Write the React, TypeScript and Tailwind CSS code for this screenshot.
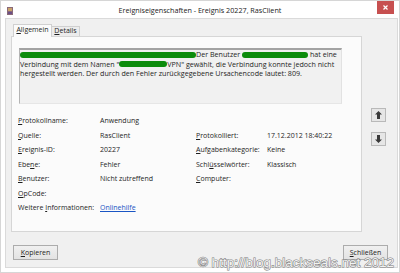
import React from "react";

// ---------------------------------------------------------------------------
// Feldzeile im unteren Bereich (Label + Wert)
// ---------------------------------------------------------------------------
interface Field {
  label: React.ReactNode;
  value?: React.ReactNode;
}

function Key({ children }: { children: React.ReactNode }) {
  return <span className="underline underline-offset-[1px]">{children}</span>;
}

function Redacted({ w }: { w: number }) {
  // Breite kommt aus den Daten, daher inline
  return (
    <span
      className="inline-block h-[6px] rounded-[3px] bg-[#0c8c0c] align-[-0.5px]"
      style={{ width: w }}
    />
  );
}

function ArrowButton({ down }: { down?: boolean }) {
  return (
    <button className="flex h-[14px] w-[15px] items-center justify-center border border-[#b9b9b9] bg-[#e6e6e6]">
      <svg width="7" height="8" viewBox="0 0 7 8" className={down ? "rotate-180" : ""}>
        <path d="M3.5 0 L7 3.6 L5 3.6 L5 8 L2 8 L2 3.6 L0 3.6 Z" fill="#3a3a3a" />
      </svg>
    </button>
  );
}

function WinButton({ children }: { children: React.ReactNode }) {
  return (
    <button className="flex h-[15px] w-[45px] items-center justify-center border border-[#acacac] bg-gradient-to-b from-[#f0f0f0] to-[#e3e3e3] text-[7px] leading-none text-[#1e1e1e]">
      {children}
    </button>
  );
}

export default function App() {
  const left: Field[] = [
    { label: <><Key>P</Key>rotokollname:</>, value: "Anwendung" },
    { label: <><Key>Q</Key>uelle:</>, value: "RasClient" },
    { label: <><Key>E</Key>reignis-ID:</>, value: "20227" },
    { label: <>Ebe<Key>n</Key>e:</>, value: "Fehler" },
    { label: <><Key>B</Key>enutzer:</>, value: "Nicht zutreffend" },
    { label: <><Key>O</Key>pCode:</> },
  ];
  const right: Field[] = [
    { label: null },
    { label: <><Key>P</Key>rotokolliert:</>, value: "17.12.2012 18:40:22" },
    { label: <><Key>A</Key>ufgabenkategorie:</>, value: "Keine" },
    { label: <>Schl<Key>ü</Key>sselwörter:</>, value: "Klassisch" },
    { label: <><Key>C</Key>omputer:</> },
    { label: null },
  ];

  return (
    <div className="relative h-[273px] w-[400px] overflow-hidden border border-[#d6d6d6] bg-white font-['Open_Sans',sans-serif] text-[7px] text-[#1e1e1e]">
      {/* Titelleiste */}
      <div className="grid h-[17px] grid-cols-[1fr_auto_1fr] items-start">
        <div className="pl-[6px] pt-[6px]">
          <svg width="6" height="8" viewBox="0 0 6 8">
            <rect x="0" y="0" width="6" height="8" fill="#8a6a7a" />
            <rect x="1" y="1" width="4" height="3" fill="#c9a36a" />
            <rect x="1" y="5" width="4" height="2" fill="#6b4f86" />
          </svg>
        </div>
        <div className="pt-[4px] text-[7.2px] leading-[10px] text-[#222]">
          Ereigniseigenschaften - Ereignis 20227, RasClient
        </div>
        <div className="flex justify-end pr-[5px]">
          <button className="flex h-[13px] w-[17px] items-center justify-center bg-[#c75050]">
            <svg width="5" height="5" viewBox="0 0 5 5">
              <path d="M0.5 0.5 L4.5 4.5 M4.5 0.5 L0.5 4.5" stroke="#fff" strokeWidth="1.2" />
            </svg>
          </button>
        </div>
      </div>

      {/* Fensterinhalt */}
      <div className="ml-[4px] mr-[1px] flex h-[250px] flex-col border border-[#dadada] bg-[#f0f0f0] pt-[5px]">
        <div className="flex pl-[5px]">
          <div className="w-[351px]">
            {/* Registerkarten */}
            <div className="flex h-[12px] items-end pl-[2px]">
              <div className="relative z-10 -mb-px flex h-[13px] w-[39px] items-center justify-center border border-b-0 border-[#d0d0d0] bg-[#fbfbfb] pb-px">
                <Key>A</Key>llgemein
              </div>
              <div className="flex h-[10px] w-[28px] items-center justify-center border border-b-0 border-l-0 border-[#d0d0d0] bg-[#ececec]">
                <Key>D</Key>etails
              </div>
            </div>

            {/* Registerseite */}
            <div className="h-[196px] border border-[#d6d6d6] bg-[#fbfbfb] pl-[7px] pt-[11px]">
              <div className="h-[56px] w-[323px] border-b border-l border-r border-t-2 border-b-[#e6e6e6] border-l-[#b4b4b4] border-r-[#e2e2e2] border-t-[#a3a3a3] bg-[#f1f1f1] text-[7.15px] leading-[9.5px] whitespace-nowrap">
                <div>
                  <Redacted w={176} />
                  Der Benutzer <Redacted w={66} /> hat eine
                </div>
                <div>
                  Verbindung mit dem Namen &quot;<Redacted w={48} />VPN&quot; gewählt, die Verbindung konnte jedoch nicht
                </div>
                <div>
                  hergestellt werden. Der durch den Fehler zurückgegebene Ursachencode lautet: 809.
                </div>
              </div>

              <div className="ml-[-1px] mt-[10px] grid grid-cols-[82px_96px_71px_1fr] auto-rows-[14.5px] items-center whitespace-nowrap">
                {left.map((f, i) => (
                  <React.Fragment key={i}>
                    <div>{f.label}</div>
                    <div>{f.value}</div>
                    <div>{right[i].label}</div>
                    <div>{right[i].value}</div>
                  </React.Fragment>
                ))}
                <div>
                  Weitere <Key>I</Key>nformationen:
                </div>
                <div className="col-span-3">
                  <span className="text-[#1a55c4] underline underline-offset-[1px]">Onlinehilfe</span>
                </div>
              </div>
            </div>
          </div>

          {/* Vor / Zurück */}
          <div className="ml-[9px] flex flex-col gap-[10px] pt-[84px]">
            <ArrowButton />
            <ArrowButton down />
          </div>
        </div>

        {/* Schaltflächen */}
        <div className="mt-[13px] flex justify-between pl-[7px] pr-[9px]">
          <WinButton>
            <Key>K</Key>opieren
          </WinButton>
          <WinButton>
            <Key>S</Key>chließen
          </WinButton>
        </div>
      </div>

      {/* Wasserzeichen */}
      <div className="absolute bottom-[1px] right-[5px] font-['Liberation_Sans',Arial,sans-serif] text-[13.5px] leading-[16px] text-[#f2f2f2] [-webkit-text-stroke:1px_#7a7a7a] [paint-order:stroke_fill]">
        © http://blog.blackseals.net 2012
      </div>
    </div>
  );
}
